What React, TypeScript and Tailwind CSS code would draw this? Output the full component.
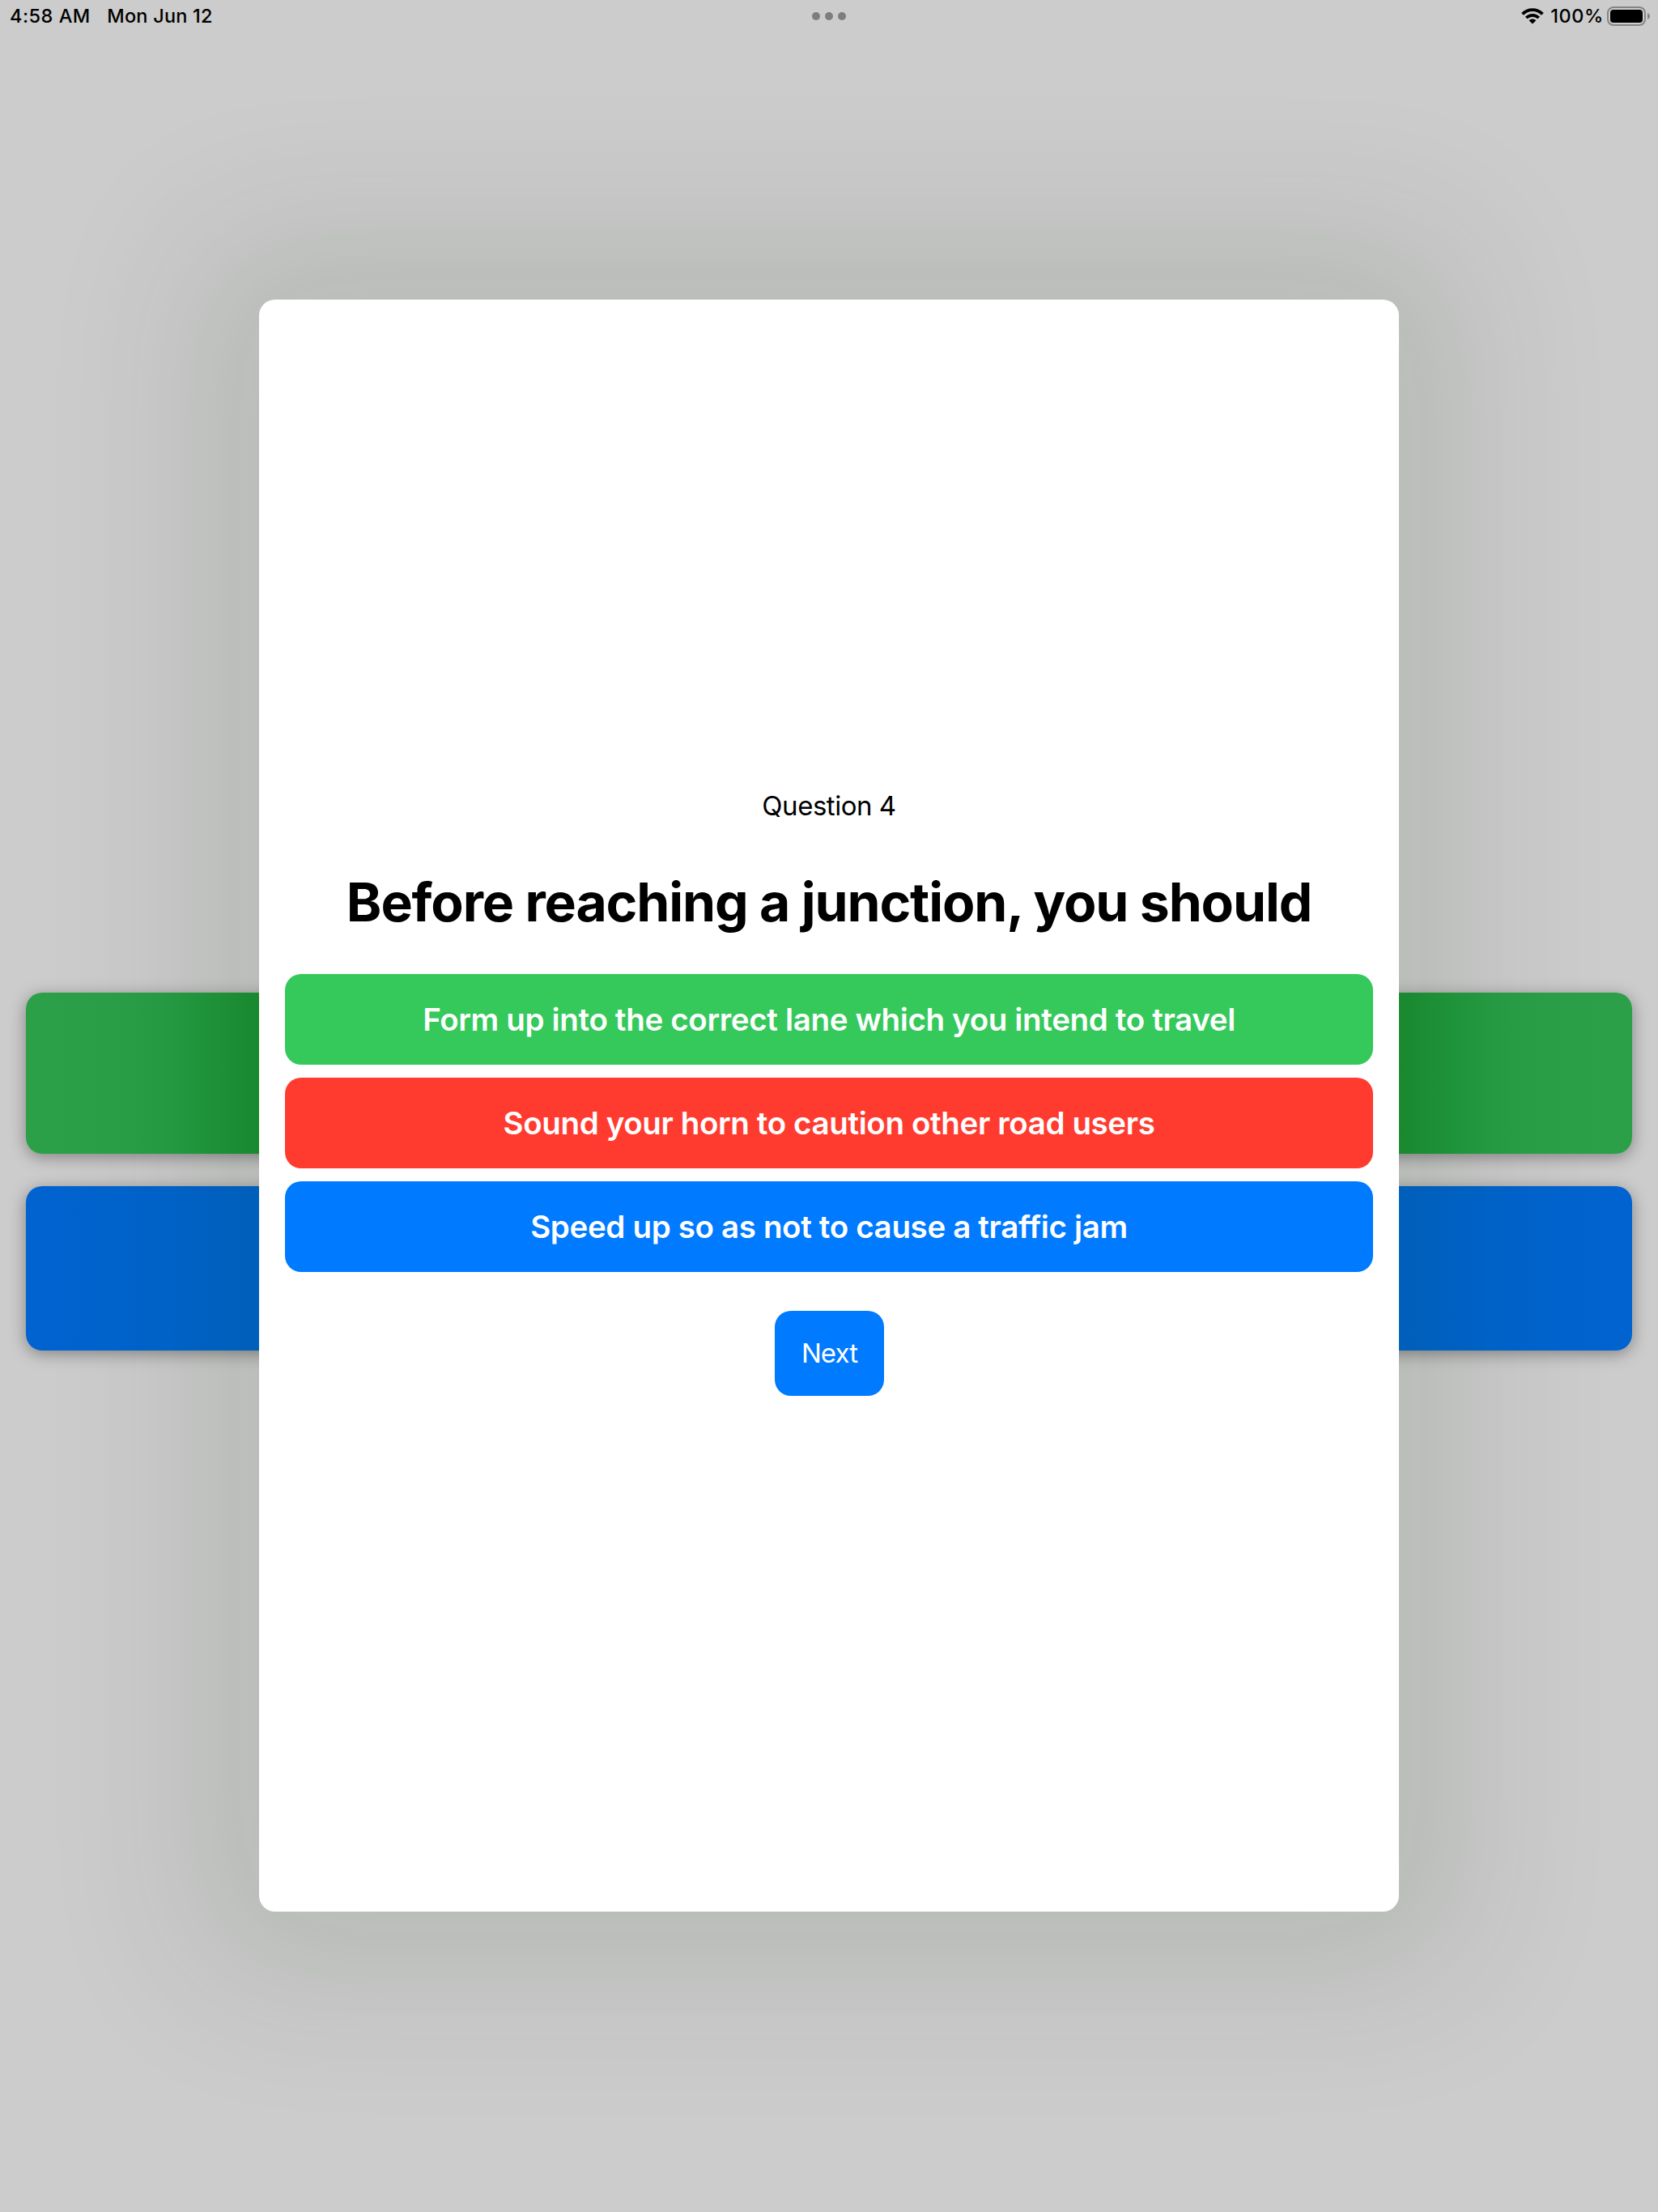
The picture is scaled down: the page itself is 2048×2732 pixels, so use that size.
const answers = [
  { text: "Form up into the correct lane which you intend to travel", color: "bg-[#35c95b]", spacing: "tracking-[-0.34px]" },
  { text: "Sound your horn to caution other road users", color: "bg-[#ff3b30]", spacing: "tracking-[-0.37px]" },
  { text: "Speed up so as not to cause a traffic jam", color: "bg-[#007aff]", spacing: "tracking-[-0.34px]" },
];

function WifiIcon() {
  return (
    <svg width="28" height="20" viewBox="0 0 28 20" className="block" fill="none" stroke="black">
      <path d="M1.600 7.400C8.400.3 19.600.3 26.400 7.400" strokeWidth="3.800" />
      <path d="M6.300 12C10.500 7.700 17.500 7.700 21.700 12" strokeWidth="3.800" />
      <path d="M14 19.600L9.600 15.200C12 12.900 16 12.900 18.400 15.200Z" fill="black" stroke="none" />
    </svg>
  );
}

function BatteryIcon() {
  return (
    <svg width="54" height="24" viewBox="0 0 54 24" className="block">
      <rect x="1" y="1" width="46" height="22" rx="7" fill="none" stroke="#858585" strokeWidth="2" />
      <rect x="4" y="4" width="40" height="16" rx="4" fill="black" />
      <path d="M50 8C52 9 53 10.400 53 12S52 15 50 16Z" fill="#858585" />
    </svg>
  );
}

function StatusBar() {
  return (
    <header className="relative flex h-10 items-center justify-between pl-3 pr-[9px] text-[23.5px] font-medium leading-10 text-black">
      <div className="flex gap-[20.5px]">
        <span className="tracking-[0.5px]">4:58 AM</span>
        <span className="tracking-[0.22px]">Mon Jun 12</span>
      </div>
      <div className="absolute left-1/2 top-[15px] flex -translate-x-1/2 gap-[6px]">
        <i className="size-[10px] rounded-full bg-[#7d7d7d]" />
        <i className="size-[10px] rounded-full bg-[#7d7d7d]" />
        <i className="size-[10px] rounded-full bg-[#7d7d7d]" />
      </div>
      <div className="flex items-center">
        <WifiIcon />
        <span className="ml-[8px] mr-[4px] tracking-[0.6px]">100%</span>
        <BatteryIcon />
      </div>
    </header>
  );
}

export default function App() {
  return (
    <div className="relative h-[2732px] w-[2048px] overflow-hidden bg-[#cccccc] font-['Inter',sans-serif]">
      <div className="absolute left-[320px] top-[370px] h-[1991px] w-[1408px] rounded-[20px] shadow-[0_0_190px_86px_rgba(10,35,0,0.105)]" />

      <div className="relative">
        <StatusBar />
        <div className="flex flex-col gap-10 px-8 pt-[1186px]">
          <div className="h-[199px] rounded-[20px] bg-[linear-gradient(90deg,#2ca049_0px,#299e47_110px,#269a42_170px,#1f933a_220px,#19882f_288px,#19882f_1696px,#1f933a_1764px,#269a42_1814px,#299e47_1874px,#2ca049_1984px)] shadow-[0_4px_20px_rgba(0,0,0,0.36)]" />
          <div className="h-[203px] rounded-[20px] bg-[linear-gradient(90deg,#0063d0_0px,#0062cb_110px,#0061c6_180px,#005fb9_288px,#005fb9_1696px,#0061c6_1804px,#0062cb_1874px,#0063d0_1984px)] shadow-[0_4px_20px_rgba(0,0,0,0.36)]" />
        </div>
      </div>

      <main className="absolute left-[320px] top-[370px] flex h-[1991px] w-[1408px] flex-col items-center rounded-[20px] bg-white px-8 pt-[601px]">
        <p className="h-12 whitespace-nowrap text-[33px] leading-[48px] tracking-[-0.48px] text-black">Question 4</p>
        <h1 className="mt-[55px] h-20 whitespace-nowrap text-[66px] font-bold leading-[80px] tracking-[-1.13px] text-black">
          Before reaching a junction, you should
        </h1>
        <div className="mt-[49px] flex w-full flex-col gap-4">
          {answers.map((a) => (
            <button
              key={a.text}
              className={`h-28 w-full whitespace-nowrap rounded-[20px] text-[38.5px] font-semibold leading-[112px] text-white ${a.color} ${a.spacing}`}
            >
              {a.text}
            </button>
          ))}
        </div>
        <button className="ml-px mt-12 h-[105px] w-[135px] rounded-[20px] bg-[#007aff] text-[33px] tracking-[-0.9px] text-white">
          Next
        </button>
      </main>
    </div>
  );
}
